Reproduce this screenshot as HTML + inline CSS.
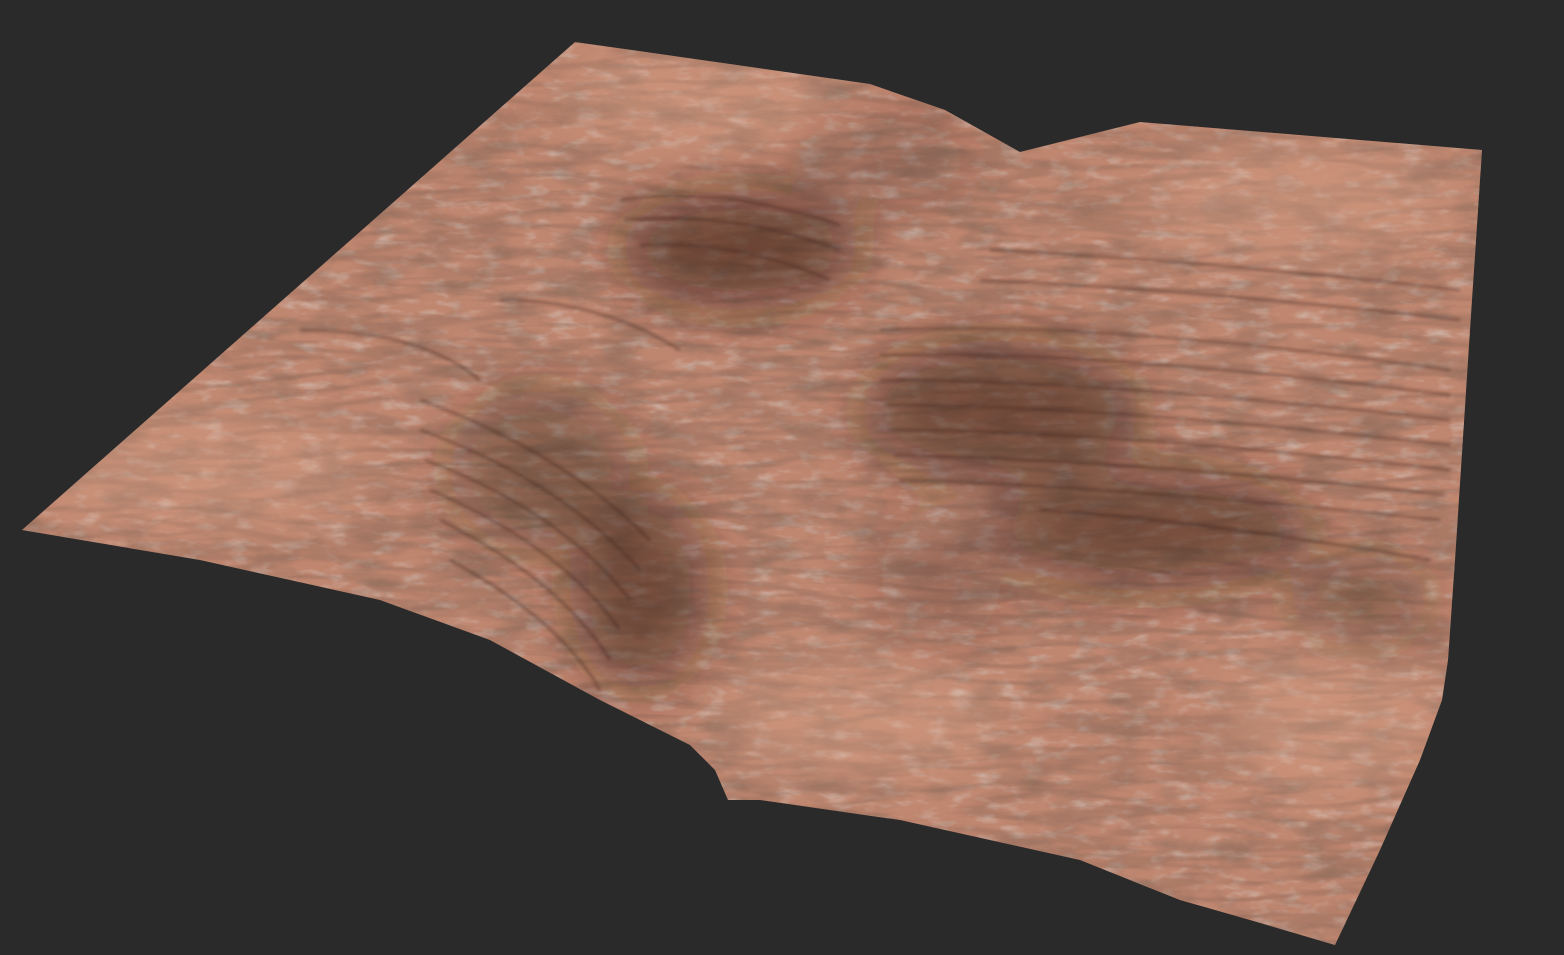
<!DOCTYPE html>
<html><head><meta charset="utf-8"><style>
html,body{margin:0;padding:0;background:#2a2a2a;}
svg{display:block}
</style></head><body>
<svg width="1564" height="955" viewBox="0 0 1564 955" xmlns="http://www.w3.org/2000/svg">
<defs>
<clipPath id="c"><path d="M575,42 L870,84 L945,110 L1020,152 L1140,122 L1482,150 L1470,330 L1455,560 L1448,660 L1442,700 L1420,760 L1380,850 L1335,945 L1250,920 L1180,900 L1080,860 L900,820 L760,800 L728,800 L715,770 L690,745 L600,700 L490,640 L380,600 L200,560 L22,530 Z"/></clipPath>
<filter id="b" x="-30%" y="-30%" width="160%" height="160%"><feGaussianBlur stdDeviation="28"/></filter>
<filter id="b2"><feGaussianBlur stdDeviation="1.5"/></filter>
<filter id="n" x="0" y="0" width="100%" height="100%">
<feTurbulence type="fractalNoise" baseFrequency="0.02 0.05" numOctaves="4" seed="3"/>
<feColorMatrix type="matrix" values="0 0 0 0 0.25  0 0 0 0 0.15  0 0 0 0 0.11  0 0 0 -2.4 1.25"/>
</filter>
<filter id="n2" x="0" y="0" width="100%" height="100%">
<feTurbulence type="fractalNoise" baseFrequency="0.04 0.1" numOctaves="3" seed="9"/>
<feColorMatrix type="matrix" values="0 0 0 0 0.68  0 0 0 0 0.62  0 0 0 0 0.58  0 0 0 -2.4 1.2"/>
</filter>
<filter id="s" x="0" y="0" width="100%" height="100%">
<feTurbulence type="turbulence" baseFrequency="0.008 0.06" numOctaves="2" seed="5"/>
<feColorMatrix type="matrix" values="0 0 0 0 0.2  0 0 0 0 0.11  0 0 0 0 0.08  0 0 0 -4 1.4"/>
</filter>
</defs>
<rect width="1564" height="955" fill="#2a2a2a"/>
<g clip-path="url(#c)">
<rect width="1564" height="955" fill="#c08770"/>
<rect width="1564" height="955" filter="url(#n2)" opacity="0.6"/>
<rect width="1564" height="955" filter="url(#n)" opacity="0.6"/>
<rect width="1564" height="955" filter="url(#s)" opacity="0.28"/>
<g filter="url(#b)" fill="#3a2218">
<ellipse cx="740" cy="250" rx="120" ry="60" opacity="0.6"/>
<ellipse cx="1000" cy="410" rx="140" ry="70" opacity="0.55"/>
<ellipse cx="1150" cy="530" rx="160" ry="60" opacity="0.55"/>
<ellipse cx="640" cy="590" rx="70" ry="100" opacity="0.55"/>
<ellipse cx="540" cy="470" rx="90" ry="80" opacity="0.4"/>
<ellipse cx="1360" cy="600" rx="70" ry="45" opacity="0.4"/>
<ellipse cx="940" cy="580" rx="60" ry="70" opacity="0.25"/>
<ellipse cx="880" cy="160" rx="90" ry="40" opacity="0.25"/>
</g>
<g filter="url(#b)" fill="#e0a88c" opacity="0.35">
<ellipse cx="200" cy="470" rx="170" ry="60"/>
<ellipse cx="700" cy="100" rx="140" ry="50"/>
<ellipse cx="1300" cy="200" rx="160" ry="60"/>
<ellipse cx="1330" cy="720" rx="110" ry="80"/>
<ellipse cx="860" cy="720" rx="150" ry="60"/>
</g>
<g filter="url(#b2)" fill="none" stroke="#3e241a" stroke-width="2.5" opacity="0.45">
<path d="M620,200 Q720,185 840,225"/><path d="M625,220 Q730,210 840,250"/><path d="M640,245 Q740,240 830,280"/>
<path d="M880,330 Q1100,320 1450,370"/><path d="M880,355 Q1100,350 1450,395"/>
<path d="M880,380 Q1100,380 1450,420"/><path d="M885,405 Q1100,405 1450,445"/>
<path d="M890,430 Q1100,430 1450,470"/><path d="M895,455 Q1100,458 1445,495"/>
<path d="M900,480 Q1100,485 1440,520"/><path d="M1040,510 Q1200,520 1430,560"/>
<path d="M420,400 Q560,450 650,540"/><path d="M420,430 Q560,480 640,570"/>
<path d="M425,460 Q560,510 630,600"/><path d="M430,490 Q560,545 620,630"/>
<path d="M440,520 Q560,580 610,660"/><path d="M450,560 Q560,620 600,690"/>
<path d="M990,250 Q1200,260 1460,290"/><path d="M980,280 Q1200,290 1460,320"/>
<path d="M300,330 Q420,330 480,380"/><path d="M500,300 Q600,300 680,350"/>
</g>
</g>
</svg>
</body></html>
